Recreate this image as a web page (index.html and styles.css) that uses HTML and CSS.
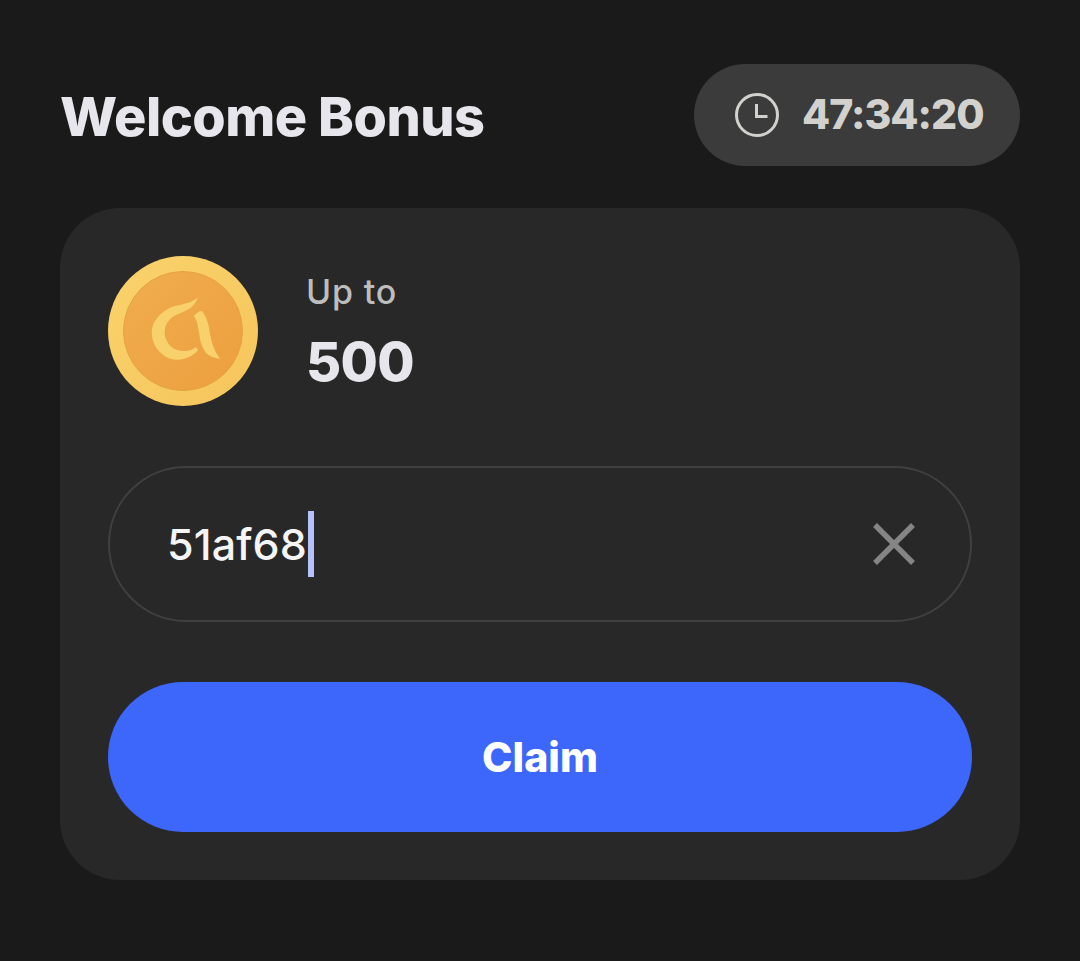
FILE: index.html
```html
<!DOCTYPE html>
<html lang="en">
<head>
<meta charset="utf-8">
<title>Welcome Bonus</title>
<link rel="stylesheet" href="styles.css">
</head>
<body>
<main class="screen">
  <header class="header">
    <h1 class="title">Welcome Bonus</h1>
    <div class="timer">
      <svg class="clock" viewBox="0 0 44 44" fill="none" stroke="#d3d1ce" stroke-width="3">
        <circle cx="22" cy="22" r="20.5"/>
        <path d="M21.5 11v12.5h11"/>
      </svg>
      <span class="time">47:34:20</span>
    </div>
  </header>
  <section class="card">
    <div class="reward">
      <svg class="coin" viewBox="0 0 150 150">
        <defs>
          <linearGradient id="rim" x1="0" y1="0" x2="1" y2="1">
            <stop offset="0" stop-color="#fad26c"/>
            <stop offset="1" stop-color="#f5c55b"/>
          </linearGradient>
          <linearGradient id="face" x1="0" y1="0" x2="1" y2="1">
            <stop offset="0" stop-color="#f0ad4e"/>
            <stop offset="1" stop-color="#ed9f3f"/>
          </linearGradient>
        </defs>
        <circle cx="75" cy="75" r="75" fill="url(#rim)"/>
        <circle cx="75" cy="75" r="59.5" fill="url(#face)" stroke="#e5a441" stroke-width="1"/>
        <path d="M90 41C85 46 79 47 72 49C64 50 56 54 51 60C45 66 43 73 44 80C45 90 52 98 60 102C68 105 76 104 83 100C86 98 89 96 90 94L88 91C84 94 80 95 76 95C69 95 63 92 60 87C57 83 56 78 57 73C58 67 62 62 68 59C72 57 76 56 79 54C84 52 88 47 90 41Z" fill="#f8d06c"/>
        <path d="M86 60C88 57 91 55 94 55C98 60 100 66 101 72C102 80 104 87 106 92C108 97 110 100 112 103C106 102 101 100 98 97C95 93 93 88 92 83C91 76 90 71 89 66C88 64 87 62 86 60Z" fill="#f8d06c"/>
      </svg>
      <div class="amount">
        <span class="amount-label">Up to</span>
        <strong class="amount-value">500</strong>
      </div>
    </div>
    <div class="field">
      <div class="field-text"><span class="code">51af68</span><span class="caret"></span></div>
      <svg class="clear" viewBox="0 0 44 44" fill="none" stroke="#858585" stroke-width="5.5">
        <path d="M3 3l38 38M41 3L3 41"/>
      </svg>
    </div>
    <button class="claim" type="button">Claim</button>
  </section>
</main>
</body>
</html>
```
FILE: styles.css
```css
* { box-sizing: border-box; }
html, body { margin: 0; padding: 0; }
body {
  width: 1080px;
  height: 961px;
  background: #1a1a1a;
  font-family: Inter, "Liberation Sans", sans-serif;
  overflow: hidden;
}
.screen { padding: 64px 60px 0; }
.header {
  display: flex;
  align-items: center;
  justify-content: space-between;
  height: 102px;
  margin-bottom: 42px;
}
.title {
  margin: 0 0 -2px;
  font-size: 54px;
  font-weight: 800;
  letter-spacing: -0.5px;
  color: #e6e6ec;
}
.timer {
  display: flex;
  align-items: center;
  gap: 23px;
  width: 326px;
  height: 102px;
  padding-left: 41px;
  border-radius: 51px;
  background: #3b3b3b;
}
.clock { width: 44px; height: 44px; flex: none; }
.time {
  margin-bottom: 2px;
  font-size: 41px;
  font-weight: 800;
  letter-spacing: -1px;
  color: #d3d1ce;
  line-height: 1;
}
.card {
  display: flex;
  flex-direction: column;
  height: 672px;
  padding: 48px;
  border-radius: 60px;
  background: #282828;
}
.reward {
  display: flex;
  align-items: center;
  gap: 48px;
  height: 150px;
  margin-bottom: 60px;
}
.coin { width: 150px; height: 150px; flex: none; }
.amount { display: flex; flex-direction: column; gap: 18px; padding-top: 3px; }
.amount-label { font-size: 34px; font-weight: 500; line-height: 40px; color: #bdbdbd; letter-spacing: 0.8px; }
.amount-value { font-size: 54px; line-height: 64px; font-weight: 800; letter-spacing: -0.7px; color: #e6e6ec; }
.field {
  display: flex;
  align-items: center;
  justify-content: space-between;
  height: 156px;
  padding: 0 54px 0 57px;
  margin-bottom: 60px;
  border: 2px solid #404040;
  border-radius: 78px;
}
.field-text { display: flex; align-items: center; }
.code { font-size: 43px; font-weight: 500; letter-spacing: 0.1px; color: #f5f5f5; }
.caret { width: 6px; height: 66px; margin-left: 1px; background: #b4c1fb; }
.clear { width: 44px; height: 44px; flex: none; }
.claim {
  height: 150px;
  padding-bottom: 1px;
  border: 0;
  border-radius: 75px;
  background: #3d66fb;
  color: #fff;
  font: 800 41px Inter, "Liberation Sans", sans-serif;
}
```
